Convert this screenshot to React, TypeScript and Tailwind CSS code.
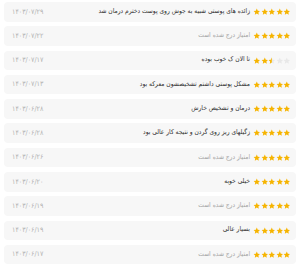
import React from 'react';

interface Review {
  id: number;
  rating: number;
  comment: string | null;
  date: string;
}

const reviews: Review[] = [
  { id: 1, rating: 5, comment: 'زائده های پوستی شبیه به جوش روی پوست دخترم درمان شد', date: '۱۴۰۳/۰۷/۲۹' },
  { id: 2, rating: 5, comment: null, date: '۱۴۰۳/۰۷/۲۲' },
  { id: 3, rating: 2.5, comment: 'تا الان ک خوب بوده', date: '۱۴۰۳/۰۷/۱۷' },
  { id: 4, rating: 5, comment: 'مشکل پوستی داشتم تشخیصشون معرکه بود', date: '۱۴۰۳/۰۷/۱۳' },
  { id: 5, rating: 5, comment: 'درمان و تشخیص خارش', date: '۱۴۰۳/۰۶/۲۸' },
  { id: 6, rating: 5, comment: 'زگیلهای ریز روی گردن و نتیجه کار عالی بود', date: '۱۴۰۳/۰۶/۲۸' },
  { id: 7, rating: 5, comment: null, date: '۱۴۰۳/۰۶/۲۶' },
  { id: 8, rating: 5, comment: 'خیلی خوبه', date: '۱۴۰۳/۰۶/۲۰' },
  { id: 9, rating: 5, comment: null, date: '۱۴۰۳/۰۶/۱۹' },
  { id: 10, rating: 5, comment: 'بسیار عالی', date: '۱۴۰۳/۰۶/۱۹' },
  { id: 11, rating: 5, comment: null, date: '۱۴۰۳/۰۶/۱۷' },
];

const STAR = 'M12 1.8l3.1 6.5 7 .9-5.1 4.9 1.3 7L12 17.7l-6.3 3.4 1.3-7-5.1-4.9 7-.9z';

function Star({ fill }: { fill: 'full' | 'half' | 'empty' }) {
  return (
    <svg viewBox="0 0 24 24" className="w-[7.6px] h-[7.6px]">
      <defs>
        <clipPath id="half-left">
          <rect x="0" y="0" width="12" height="24" />
        </clipPath>
      </defs>
      <path d={STAR} fill={fill === 'full' ? '#f6b400' : '#e8e8e8'} />
      {fill === 'half' && <path d={STAR} fill="#f6b400" clipPath="url(#half-left)" />}
    </svg>
  );
}

function Stars({ rating }: { rating: number }) {
  return (
    <div dir="ltr" className="flex items-center">
      {[1, 2, 3, 4, 5].map((i) => (
        <Star key={i} fill={rating >= i ? 'full' : rating >= i - 0.5 ? 'half' : 'empty'} />
      ))}
    </div>
  );
}

export default function App() {
  return (
    <div
      dir="rtl"
      className="w-[300px] h-[267px] bg-white px-[4px] pt-[2px] flex flex-col gap-[4.8px] overflow-hidden"
      style={{ fontFamily: '"DejaVu Sans Condensed", "DejaVu Sans", sans-serif' }}
    >
      {reviews.map((r) => (
        <div
          key={r.id}
          className="h-[19.5px] shrink-0 bg-[#f7f7f7] rounded-[4px] flex items-center justify-between pr-[5px] pl-[8px]"
        >
          <div className="flex items-center gap-[3px]">
            <Stars rating={r.rating} />
            {r.comment ? (
              <span className="text-[6.6px] text-[#2f2f2f]">{r.comment}</span>
            ) : (
              <span className="text-[6.6px] text-[#a3a3a3]">امتیاز درج شده است</span>
            )}
          </div>
          <span className="text-[7px] text-[#b3b3b3]">{r.date}</span>
        </div>
      ))}
    </div>
  );
}
